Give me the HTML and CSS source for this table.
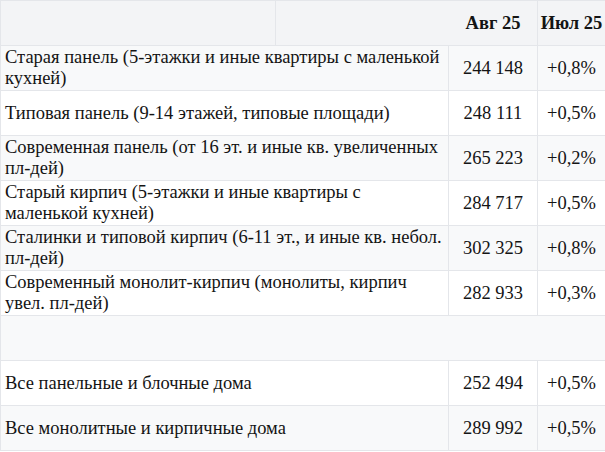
FILE: index.html
```html
<!DOCTYPE html>
<html lang="ru">
<head>
<meta charset="utf-8">
<title>Цены</title>
<link rel="stylesheet" href="styles.css">
</head>
<body>
<table class="price-table">
  <colgroup>
    <col class="c-name1">
    <col class="c-name2">
    <col class="c-val">
    <col class="c-chg">
  </colgroup>
  <thead>
    <tr>
      <th class="blank"></th>
      <th class="blank no-right"></th>
      <th class="num">Авг 25</th>
      <th class="num">Июл 25</th>
    </tr>
  </thead>
  <tbody>
    <tr><td colspan="2" class="name">Старая панель (5-этажки и иные квартиры с маленькой<br>кухней)</td><td class="num">244 148</td><td class="num">+0,8%</td></tr>
    <tr><td colspan="2" class="name">Типовая панель (9-14 этажей, типовые площади)</td><td class="num">248 111</td><td class="num">+0,5%</td></tr>
    <tr><td colspan="2" class="name">Современная панель (от 16 эт. и иные кв. увеличенных<br>пл-дей)</td><td class="num">265 223</td><td class="num">+0,2%</td></tr>
    <tr><td colspan="2" class="name">Старый кирпич (5-этажки и иные квартиры с<br>маленькой кухней)</td><td class="num">284 717</td><td class="num">+0,5%</td></tr>
    <tr><td colspan="2" class="name">Сталинки и типовой кирпич (6-11 эт., и иные кв. небол.<br>пл-дей)</td><td class="num">302 325</td><td class="num">+0,8%</td></tr>
    <tr><td colspan="2" class="name">Современный монолит-кирпич (монолиты, кирпич<br>увел. пл-дей)</td><td class="num">282 933</td><td class="num">+0,3%</td></tr>
    <tr class="empty"><td colspan="4"></td></tr>
    <tr><td colspan="2" class="name">Все панельные и блочные дома</td><td class="num">252 494</td><td class="num">+0,5%</td></tr>
    <tr><td colspan="2" class="name">Все монолитные и кирпичные дома</td><td class="num">289 992</td><td class="num">+0,5%</td></tr>
  </tbody>
</table>
</body>
</html>
```
FILE: styles.css
```css
html, body {
  margin: 0;
  padding: 0;
  background: #ffffff;
}

.price-table {
  width: 605px;
  border-collapse: collapse;
  table-layout: fixed;
  font-family: "Liberation Serif", "Times New Roman", serif;
  font-size: 18.5px;
  line-height: 21px;
  color: #141414;
}

.c-name1 { width: 275px; }
.c-name2 { width: 173px; }
.c-val { width: 89px; }
.c-chg { width: 68px; }

.price-table th,
.price-table td {
  border: 1px solid #e4e6ea;
  padding: 0 4px;
  vertical-align: middle;
}

.price-table thead tr {
  height: 45px;
  background: #f3f4f6;
}

.price-table th {
  font-weight: bold;
}

.price-table th.no-right {
  border-right-color: transparent;
}

.price-table tbody tr {
  height: 45px;
}

.price-table tbody tr:nth-child(odd) {
  background: #f8f9fa;
}

.price-table .name {
  text-align: left;
  white-space: nowrap;
}

.price-table .num {
  text-align: center;
  padding: 0 1px;
  white-space: nowrap;
}
```
